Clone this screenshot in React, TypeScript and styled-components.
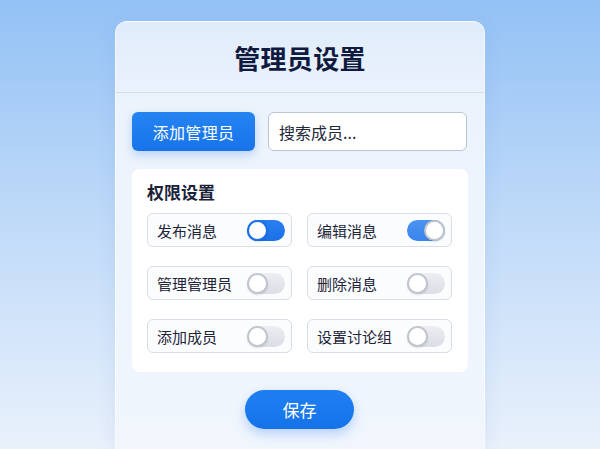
import React, { useState } from 'react';
import styled, { createGlobalStyle } from 'styled-components';

const GlobalStyle = createGlobalStyle`
  html, body {
    margin: 0;
    padding: 0;
    height: 100%;
  }
  body {
    font-family: 'Noto Sans CJK SC', 'Noto Sans', sans-serif;
    background: linear-gradient(180deg, #93c1f5 0%, #bcd8f8 45%, #e9f1fb 100%);
    overflow: hidden;
  }
`;

const Page = styled.div`
  width: 600px;
  height: 449px;
  display: flex;
  justify-content: center;
  padding-top: 21px;
  box-sizing: border-box;
  overflow: hidden;
`;

const Card = styled.div`
  width: 370px;
  height: 428px;
  border-radius: 12px 12px 0 0;
  background: linear-gradient(180deg, #e0ecfb 0%, #ecf3fc 20%, #f1f6fd 100%);
  border: 1px solid rgba(255, 255, 255, 0.55);
  border-bottom: none;
  box-shadow: 0 4px 18px rgba(70, 120, 190, 0.12);
  box-sizing: border-box;
  display: flex;
  flex-direction: column;
`;

const Header = styled.div`
  height: 70px;
  flex-shrink: 0;
  display: flex;
  align-items: center;
  justify-content: center;
  border-bottom: 1px solid #d9dee6;
`;

const Title = styled.h1`
  margin: 0;
  font-size: 26px;
  font-weight: 700;
  color: #101a3e;
  letter-spacing: 0.3px;
`;

const Body = styled.div`
  padding: 19px 17px 0 16px;
  display: flex;
  flex-direction: column;
`;

const Toolbar = styled.div`
  display: flex;
  gap: 13px;
  height: 39px;
`;

const AddButton = styled.button`
  width: 123px;
  flex-shrink: 0;
  border: none;
  border-radius: 6px;
  background: linear-gradient(180deg, #2584f2 0%, #1773ea 100%);
  color: #fff;
  font-family: inherit;
  font-size: 16px;
  letter-spacing: 0.3px;
  box-shadow: 0 4px 10px rgba(30, 110, 230, 0.25);
  cursor: pointer;
`;

const SearchInput = styled.input`
  flex: 1;
  min-width: 0;
  border: 1px solid #bcc4d3;
  border-radius: 6px;
  background: #fff;
  padding: 0 10px;
  font-family: inherit;
  font-size: 16px;
  color: #222;
  outline: none;
  &::placeholder {
    color: #23283a;
  }
`;

const Panel = styled.div`
  margin-top: 18px;
  margin-right: -1px;
  background: #fff;
  border-radius: 8px;
  padding: 11px 16px 19px 15px;
`;

const PanelTitle = styled.div`
  font-size: 17px;
  font-weight: 700;
  line-height: 24px;
  color: #1a2238;
  margin-bottom: 9px;
`;

const Grid = styled.div`
  display: grid;
  grid-template-columns: 1fr 1fr;
  column-gap: 15px;
  row-gap: 19px;
`;

const Item = styled.div`
  height: 34px;
  border: 1px solid #d9dee7;
  border-radius: 6px;
  background: #fbfcfe;
  box-sizing: border-box;
  display: flex;
  align-items: center;
  justify-content: space-between;
  padding: 0 6px 0 9px;
`;

const Label = styled.span`
  font-size: 15px;
  color: #1e2538;
`;

const Track = styled.button<{ $on: boolean; $knobRight: boolean }>`
  position: relative;
  width: 38px;
  height: 21px;
  border-radius: 11px;
  border: none;
  padding: 0;
  cursor: pointer;
  background: ${(p) =>
    p.$on
      ? p.$knobRight
        ? 'linear-gradient(180deg, #4a93f2, #3a86ef)'
        : 'linear-gradient(180deg, #2a7ff0, #1a70e6)'
      : 'linear-gradient(180deg, #eceef2, #dadee5)'};
`;

const Knob = styled.span<{ $on: boolean; $right: boolean }>`
  position: absolute;
  top: 0;
  ${(p) => (p.$right ? 'right: 0;' : 'left: 0;')}
  width: 21px;
  height: 21px;
  border-radius: 50%;
  background: #fff;
  box-sizing: border-box;
  border: 2px solid ${(p) => (p.$on ? '#1a70e6' : '#c0c5ce')};
  box-shadow: 0 1px 2px rgba(0, 0, 0, 0.12);
`;

const Footer = styled.div`
  display: flex;
  justify-content: center;
  margin-top: 18px;
`;

const SaveButton = styled.button`
  width: 109px;
  height: 39px;
  border: none;
  border-radius: 20px;
  background: linear-gradient(180deg, #1f7ff2 0%, #1573ea 100%);
  color: #fff;
  font-family: inherit;
  font-size: 17px;
  box-shadow: 0 5px 12px rgba(30, 110, 230, 0.28);
  cursor: pointer;
`;

interface Perm {
  label: string;
  on: boolean;
  knobRight: boolean;
}

const initial: Perm[] = [
  { label: '发布消息', on: true, knobRight: false },
  { label: '编辑消息', on: true, knobRight: true },
  { label: '管理管理员', on: false, knobRight: false },
  { label: '删除消息', on: false, knobRight: false },
  { label: '添加成员', on: false, knobRight: false },
  { label: '设置讨论组', on: false, knobRight: false },
];

const App = () => {
  const [perms, setPerms] = useState(initial);

  const toggle = (i: number) =>
    setPerms(perms.map((p, j) => (j === i ? { ...p, on: !p.on, knobRight: !p.on } : p)));

  return (
    <>
      <GlobalStyle />
      <Page>
        <Card>
          <Header>
            <Title>管理员设置</Title>
          </Header>
          <Body>
            <Toolbar>
              <AddButton>添加管理员</AddButton>
              <SearchInput placeholder="搜索成员..." />
            </Toolbar>
            <Panel>
              <PanelTitle>权限设置</PanelTitle>
              <Grid>
                {perms.map((p, i) => (
                  <Item key={p.label}>
                    <Label>{p.label}</Label>
                    <Track $on={p.on} $knobRight={p.knobRight} onClick={() => toggle(i)}>
                      <Knob $on={p.on && !p.knobRight} $right={p.knobRight} />
                    </Track>
                  </Item>
                ))}
              </Grid>
            </Panel>
            <Footer>
              <SaveButton>保存</SaveButton>
            </Footer>
          </Body>
        </Card>
      </Page>
    </>
  );
};

export default App;
